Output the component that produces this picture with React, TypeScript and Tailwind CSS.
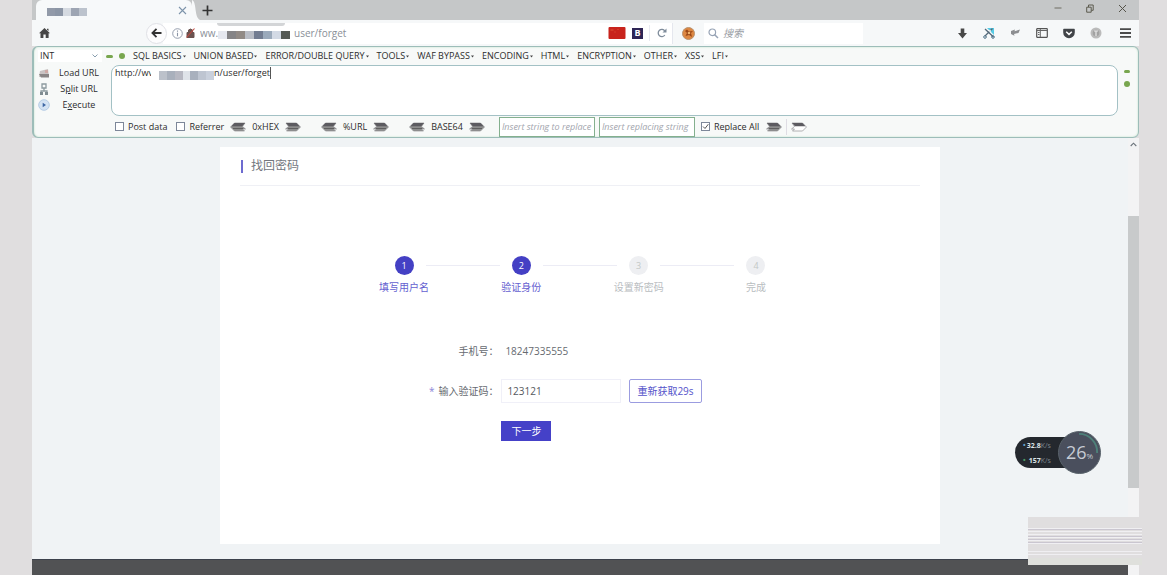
import React from "react";

const menus = [
  "SQL BASICS",
  "UNION BASED",
  "ERROR/DOUBLE QUERY",
  "TOOLS",
  "WAF BYPASS",
  "ENCODING",
  "HTML",
  "ENCRYPTION",
  "OTHER",
  "XSS",
  "LFI",
];

const steps = [
  { label: "填写用户名", active: true },
  { label: "验证身份", active: true },
  { label: "设置新密码", active: false },
  { label: "完成", active: false },
];

function Mosaic({ cells, className }: { cells: string[]; className: string }) {
  return (
    <div aria-hidden="true" className={`pointer-events-none flex ${className}`}>
      {cells.map((c, i) => (
        <span key={i} className={`flex-1 ${c}`} />
      ))}
    </div>
  );
}

function Arrow({ left = false, hollow = false }: { left?: boolean; hollow?: boolean }) {
  return (
    <svg width="16" height="10" viewBox="0 0 16 10" className={left ? "-scale-x-100" : ""} aria-hidden="true">
      <path d="M1 1H11.5L15.5 5L11.5 9H1.5L3.5 7H0.5L3.5 4.5Z" fill={hollow ? "#fff" : "#8d8d8d"} stroke="#8f8f94" strokeWidth="0.7" />
      <path d="M1 1H11.5L14.5 4.2H4Z" fill="#5c5b60" />
      {!hollow && <path d="M3 6.5H13" stroke="#5f5f5f" strokeWidth="1" />}
    </svg>
  );
}

function Converter({ name }: { name: string }) {
  return (
    <div className="flex items-center gap-[6px]">
      <button aria-label={`${name} decode`}><Arrow left /></button>
      <span>{name}</span>
      <button aria-label={`${name} encode`}><Arrow /></button>
    </div>
  );
}

function Check({ label, checked = false }: { label: string; checked?: boolean }) {
  return (
    <label className="flex items-center gap-1">
      <span className="relative flex">
        <input
          type="checkbox"
          defaultChecked={checked}
          className="peer h-[9px] w-[9px] appearance-none border border-[#7d8799] bg-white"
        />
        <svg viewBox="0 0 9 9" className="pointer-events-none absolute inset-0 hidden h-[9px] w-[9px] peer-checked:block">
          <path d="M2 4.5L4 6.5L7.3 2.2" fill="none" stroke="#555" strokeWidth="1" />
        </svg>
      </span>
      {label}
    </label>
  );
}

function TabBar() {
  return (
    <div className="flex h-5 items-stretch bg-[#c5c7c8]">
      <div className="relative ml-1 flex w-[156px] items-center justify-end rounded-t-md bg-[#f7f9fa] pr-1">
        <Mosaic className="absolute top-2 left-[11px] h-2 w-10" cells={["bg-[#929aa9]", "bg-[#8c96a6]", "bg-[#d5dae1]", "bg-[#9da5b3]", "bg-[#bcc3cd]"]} />
        <button aria-label="Close tab" className="flex pr-px">
          <svg width="9" height="9" viewBox="0 0 9 9"><path d="M1 1L8 8M8 1L1 8" stroke="#7d94aa" strokeWidth="1.1" /></svg>
        </button>
        <svg className="absolute top-0 left-full h-5 w-2" viewBox="0 0 8 20" preserveAspectRatio="none"><path d="M0 0C5 2 2 17 8 20H0Z" fill="#f7f9fa" /></svg>
      </div>
      <button aria-label="New tab" className="flex items-center pl-[10px]">
        <svg width="11" height="11" viewBox="0 0 11 11"><path d="M5.5 0.5V10.5M0.5 5.5H10.5" stroke="#333" strokeWidth="1.7" /></svg>
      </button>
      <div className="ml-auto flex items-center gap-6 pr-3 pb-1">
        <button aria-label="Minimize"><svg width="8" height="8" viewBox="0 0 8 8"><path d="M0.5 4H7.5" stroke="#6e6c62" /></svg></button>
        <button aria-label="Restore"><svg width="8" height="9" viewBox="0 0 8 9"><path d="M0.7 3.2H5.2V8.2H0.7ZM2.5 3V1H7.2V6.3H5.4" fill="none" stroke="#5c5a4e" /></svg></button>
        <button aria-label="Close window"><svg width="9" height="9" viewBox="0 0 9 9"><path d="M1 1L8 8M8 1L1 8" stroke="#55534a" /></svg></button>
      </div>
    </div>
  );
}

function NavBar() {
  return (
    <div className="flex h-[26px] items-center bg-[#f6f8f9]">
      <button aria-label="Home" className="ml-[7px]">
        <svg width="11" height="10" viewBox="0 0 11 10"><path d="M5.5 0L11 5.2H9.6V10H6.7V6.6H4.4V10H1.5V5.2H0L5.5 0ZM8 0.8H9.5V3L8 1.8Z" fill="#464646" /></svg>
      </button>
      <button aria-label="Back" className="z-10 ml-24 flex h-[21px] w-[21px] items-center justify-center rounded-full border border-[#e0e1e6] bg-[#fcfcfd]">
        <svg width="11" height="10" viewBox="0 0 11 10"><path d="M5.5 0.8L1.4 5L5.5 9.2M1.5 5H10.5" fill="none" stroke="#333" strokeWidth="1.8" /></svg>
      </button>
      <div className="relative -ml-1 flex h-[21px] flex-1 items-center bg-white pl-[9px]">
        <svg width="11" height="11" viewBox="0 0 11 11"><circle cx="5.5" cy="5.5" r="4.8" fill="none" stroke="#8b94a5" strokeWidth="0.9" /><path d="M5.5 4.8V8.2M5.5 2.6V3.8" stroke="#8b94a5" strokeWidth="1.1" /></svg>
        <svg width="9" height="10" viewBox="0 0 9 10" className="ml-[3px]"><path d="M1 4.5H8V9.5H1ZM2.5 4.5V2Q4.5 0 6.5 2V4.5" fill="#6b5350" stroke="#6b5350" /><path d="M0.5 9.5L8.5 0.5" stroke="#c44940" strokeWidth="1.1" /></svg>
        <input aria-label="Address" defaultValue={"ww."} className="ml-[5px] w-[18px] bg-transparent text-[10px] text-[#8a8f98] outline-none" />
        <Mosaic className="mt-1 h-2 w-[72px]" cells={["bg-[#e6e8ef]", "bg-[#858486]", "bg-[#918a85]", "bg-[#b9bdc5]", "bg-[#737d91]", "bg-[#9baabb]", "bg-[#d3dae5]", "bg-[#555a55]"]} />
        <span className="ml-1 text-[10px] text-[#8a8f98]">user/forget</span>
        <span className="absolute top-0 left-[54px] h-[3px] w-[68px] rounded-b-full bg-[#d3d5d7]" />
        <div className="ml-auto flex items-center gap-[6px] pr-1">
          <svg width="18" height="12" viewBox="0 0 17 12"><rect width="17" height="12" rx="1" fill="#c8231c" /><path d="M2 3H5M9 2.5H10M6 5H7" stroke="#dc5434" /></svg>
          <span className="flex h-[11px] w-[11px] items-center justify-center bg-[#2e2555] text-[9px] font-bold text-white">B</span>
          <span className="h-4 w-px bg-[#e9ebf2]" />
          <button aria-label="Reload" className="mx-px">
            <svg width="10" height="10" viewBox="0 0 10 10"><path d="M7.8 7A3.6 3.6 0 1 1 7.8 3" fill="none" stroke="#7f8c9b" strokeWidth="1.3" /><path d="M9.5 0.5V4.5H5.5Z" fill="#7f8c9b" /></svg>
          </button>
        </div>
      </div>
      <div className="flex h-[21px] items-center border-l border-[#e5e7ee] px-[9px]">
        <svg width="13" height="13" viewBox="0 0 13 13"><circle cx="6.5" cy="6.5" r="6" fill="#dd8742" stroke="#b8926f" /><path d="M3 4L5 6L3.5 9L7 8L10 10L9 6L11 4L7 4.5L5 2.5Z" fill="#9a4616" /><circle cx="7" cy="6" r="1.3" fill="#efb16b" /></svg>
      </div>
      <div className="flex h-[21px] w-[159px] items-center bg-white pl-1">
        <svg width="11" height="11" viewBox="0 0 11 11"><circle cx="4.3" cy="4.3" r="3.3" fill="none" stroke="#97a3b5" strokeWidth="1.2" /><path d="M6.7 6.7L10 10" stroke="#97a3b5" strokeWidth="1.5" /></svg>
        <input aria-label="搜索" placeholder="搜索" className="ml-1 min-w-0 flex-1 bg-transparent text-[10px] italic outline-none placeholder:text-[#9a9ea5]" />
      </div>
      <div className="ml-[94px] flex items-center gap-[15px] pr-[8px]">
        <button aria-label="Downloads"><svg width="11" height="11" viewBox="0 0 11 11"><path d="M3.7 0.5H7.3V5H10L5.5 10.5L1 5H3.7Z" fill="#484848" /></svg></button>
        <button aria-label="Screenshot"><svg width="12" height="12" viewBox="0 0 12 12"><path d="M4 1H11V8Z" fill="#57cbe5" /><path d="M2 2L10.5 10M9.5 1.5L2 9" stroke="#536878" strokeWidth="1.3" /><circle cx="2" cy="10" r="1.3" fill="none" stroke="#4e7288" /><circle cx="10" cy="10" r="1.3" fill="none" stroke="#4e7288" /><circle cx="7" cy="4" r="1" fill="#fff" /></svg></button>
        <button aria-label="Undo"><svg width="11" height="10" viewBox="0 0 11 10"><path d="M1 3L5 1.5L4.5 3.3L10 1.5L8.5 5L4 6L4.5 7.8L1 6Z" fill="#8c8e91" /></svg></button>
        <button aria-label="Sidebar"><svg width="12" height="10" viewBox="0 0 12 10"><rect x="0.7" y="0.7" width="10.6" height="8.6" rx="0.5" fill="none" stroke="#555" strokeWidth="1.2" /><path d="M4.3 1V9M1 2.5H11M2 4.5H3.5M2 6.5H3.5" stroke="#666" /></svg></button>
        <button aria-label="Pocket"><svg width="12" height="11" viewBox="0 0 12 11"><path d="M1 0.7H11Q12 0.7 11.8 2V4.5A5.8 5.8 0 0 1 0.2 4.5V2Q0 0.7 1 0.7Z" fill="#414448" /><path d="M3.2 3.8L6 6.4L8.8 3.8" fill="none" stroke="#fff" strokeWidth="1.5" /></svg></button>
        <button aria-label="Add-on"><svg width="12" height="12" viewBox="0 0 12 12"><circle cx="6" cy="6" r="5.5" fill="#bbb" /><circle cx="6" cy="6" r="3.3" fill="#a2a2a2" /><path d="M4 4H8M6 4V9" stroke="#e8e8e8" strokeWidth="1.2" /></svg></button>
        <button aria-label="Menu" className="ml-[3px]"><svg width="11" height="10" viewBox="0 0 11 10"><path d="M0 1.2H11M0 5H11M0 8.8H11" stroke="#4a4a4a" strokeWidth="1.8" /></svg></button>
      </div>
    </div>
  );
}

function HackBar() {
  return (
    <section className="flex h-[92px] flex-col rounded-md border border-[#9dbdb9] border-l-2 bg-[#f7f9f8] text-[9px] leading-3 text-[#2c2c2c] shadow-[inset_0_0_2px_#b8dfc0]">
      <div className="flex h-[18px] items-center">
        <div className="relative ml-1 w-[64px] bg-white">
          <select aria-label="Type" className="w-full appearance-none bg-transparent pl-[2px] outline-none">
            <option>INT</option>
          </select>
          <svg width="6" height="4" viewBox="0 0 6 4" className="pointer-events-none absolute top-1 right-1"><path d="M0.5 0.5L3 3L5.5 0.5" fill="none" stroke="#8a9faf" /></svg>
        </div>
        <span className="ml-1 h-[3px] w-[7px] rounded-sm bg-[#78a64e]" />
        <span className="ml-1.5 h-[6px] w-[6px] rounded-full bg-[#78a64e]" />
        <nav className="ml-2 flex gap-2 whitespace-nowrap">
          {menus.map((m) => (
            <button key={m} className="flex items-center gap-px">
              {m}
              <svg width="3" height="3" viewBox="0 0 3 3"><path d="M0 0.5H3L1.5 2.5Z" fill="#444" /></svg>
            </button>
          ))}
        </nav>
      </div>
      <div className="flex h-[51px]">
        <div className="flex w-[77px] flex-col">
          <button className="flex h-4 items-center"><svg width="12" height="11" viewBox="0 0 12 11" className="ml-1"><path d="M2 3L10 1L11 9H1Z" fill="#c9c3c3" /><path d="M1 6H11V9.5H3Z" fill="#898585" /><path d="M7 2H10V5H7Z" fill="#ceaaa6" /></svg><span className="flex-1 pr-[3px] text-center">Load URL</span></button>
          <button className="flex h-4 items-center"><svg width="12" height="12" viewBox="0 0 12 12" className="ml-1"><path d="M4 1H8V5H4ZM6 5V8M3 11V8H9V11" fill="none" stroke="#8d9a9f" strokeWidth="1.3" /><path d="M2 9H5V12H2ZM7 9H10V12H7Z" fill="#7f8c91" /></svg><span className="flex-1 pr-[3px] text-center">S<u>p</u>lit URL</span></button>
          <button className="flex h-4 items-center"><svg width="12" height="12" viewBox="0 0 12 12" className="ml-1"><circle cx="6" cy="6" r="5.3" fill="#d4e3f3" stroke="#b5cce4" /><path d="M4.7 3.8L8 6L4.7 8.2Z" fill="#3e67a4" /></svg><span className="flex-1 pr-[3px] text-center">E<u>x</u>ecute</span></button>
        </div>
        <div className="relative flex-1">
          <textarea
            aria-label="URL"
            defaultValue={"http://wv"}
            className="block h-full w-full resize-none rounded-lg border border-[#a3c1c5] bg-white px-[3px] pt-px outline-none"
          />
          <div className="pointer-events-none absolute top-[2px] left-[40px] flex items-start">
            <Mosaic className="mt-1 h-[9px] w-[63px] border-l-8 border-white" cells={["bg-[#bcc1ca]", "bg-[#a9b0bc]", "bg-[#b7b8c2]", "bg-[#dfe3e9]", "bg-[#a8b0bd]", "bg-[#bec5d1]", "bg-[#c9d0dc]"]} />
            <span className="border-r border-[#555] leading-3">n/user/forget</span>
          </div>
        </div>
        <div className="flex w-5 flex-col items-center gap-2 pt-[5px] pr-[3px]">
          <span className="h-[3px] w-[6px] rounded-sm bg-[#78a64e]" />
          <span className="h-[6px] w-[6px] rounded-full bg-[#78a64e]" />
        </div>
      </div>
      <div className="flex h-[21px] items-center pl-[81px] whitespace-nowrap">
        <div className="flex gap-[9px]">
          <Check label="Post data" />
          <Check label="Referrer" />
        </div>
        <div className="ml-[6px] flex gap-5">
          <Converter name="0xHEX" />
          <Converter name="%URL" />
          <Converter name="BASE64" />
        </div>
        <div className="mr-[6px] ml-[14px] flex gap-1">
          <input aria-label="String to replace" placeholder="Insert string to replace" className="h-5 w-24 border border-[#84b08e] bg-white px-[2px] italic outline-none placeholder:text-[#a2a5ad]" />
          <input aria-label="Replacing string" placeholder="Insert replacing string" className="h-5 w-24 border border-[#84b08e] bg-white px-[2px] italic outline-none placeholder:text-[#a2a5ad]" />
        </div>
        <Check label="Replace All" checked />
        <button aria-label="Replace" className="ml-[7px]"><Arrow /></button>
        <span className="mx-1 h-4 w-px bg-[#dfdde4]" />
        <button aria-label="Replace next"><Arrow hollow /></button>
      </div>
    </section>
  );
}

function Steps() {
  return (
    <ol className="mx-auto mt-[70px] flex w-[69%]">
      {steps.map((s, i) => (
        <li key={s.label} className="flex flex-1 flex-col items-center">
          <div className="flex w-full items-center">
            <span className={`h-px flex-1 ${i === 0 ? "bg-transparent" : "bg-[#ececf5]"}`} />
            <span className={`mx-3 flex h-[19px] w-[19px] items-center justify-center rounded-full text-[9px] ${s.active ? "bg-[#4440c4] text-white" : "bg-[#eeeff2] text-[#c3c8c6]"}`}>{i + 1}</span>
            <span className={`h-px flex-1 ${i === 3 ? "bg-transparent" : "bg-[#ececf5]"}`} />
          </div>
          <span className={`mt-1 text-[10px] leading-4 ${s.active ? "text-[#6460d0]" : "text-[#b9bdbf]"}`}>{s.label}</span>
        </li>
      ))}
    </ol>
  );
}

function ResetForm() {
  return (
    <form className="mt-[46px] grid grid-cols-[38%_1fr] items-center gap-y-[18px] text-[10px] text-[#666a70]" onSubmit={(e) => e.preventDefault()}>
      <span className="text-right leading-5">手机号：</span>
      <span className="pl-[7px]">18247335555</span>
      <label htmlFor="code" className="text-right"><span className="mr-1 text-[#8a86d8]">*</span>输入验证码：</label>
      <div className="flex gap-2 pl-[3px]">
        <input id="code" defaultValue="123121" className="h-6 w-[120px] border border-[#f0f0f8] px-[5px] text-[#555960] outline-none" />
        <button type="button" className="h-6 rounded-xs border border-[#9b9ce0] px-[7px] text-[#5553ca]">重新获取29s</button>
      </div>
      <div className="col-start-2 pl-[3px]">
        <button className="block h-5 w-[50px] bg-[#4541c8] text-white">下一步</button>
      </div>
    </form>
  );
}

function SpeedWidget() {
  return (
    <div className="absolute top-[431px] right-[66px] flex items-center">
      <div className="-mr-4 flex h-[31px] w-[59px] flex-col justify-center rounded-l-full bg-[#24282e] pl-2 text-[7px] leading-[15px] font-bold text-[#dde3e6]">
        <span><span className="mr-px text-[#64a3d0]">•</span>32.8<span className="font-normal text-[#7b858e]">K/s</span></span>
        <span><span className="mr-[3px] text-[#4b9a64]">•</span>157<span className="font-normal text-[#7b858e]">K/s</span></span>
      </div>
      <div className="relative flex h-[43px] w-[43px] items-center justify-center rounded-full border border-[#59636b] bg-[#4a4f5d] text-[18px] text-[#c7cbd4]">
        <svg viewBox="0 0 43 43" className="absolute inset-0" aria-hidden="true"><path d="M21 2A19 19 0 0 1 40 22" fill="none" stroke="#4e8079" strokeWidth="2" /></svg>
        26<span className="mt-1.5 text-[8px]">%</span>
      </div>
    </div>
  );
}

export default function App() {
  return (
    <div className="relative flex min-h-screen flex-col bg-[#e0dedf] pr-7 pl-8 font-['Open_Sans','Noto_Sans_CJK_SC',sans-serif]">
      <header>
        <TabBar />
        <NavBar />
        <HackBar />
      </header>
      <div className="flex flex-1">
        <div className="flex flex-1 flex-col bg-[#f0f3f5]">
          <main className="mx-auto mt-[9px] mb-[15px] w-full max-w-[720px] bg-white px-5 pb-[103px]">
            <div className="border-b border-[#eff0f5] py-[9px]">
              <h1 className="flex items-center gap-2 pl-px text-[12px] leading-5 text-[#73777e]"><span className="h-[13px] w-[2px] bg-[#6d6bd0]" />找回密码</h1>
            </div>
            <Steps />
            <ResetForm />
          </main>
          <footer className="min-h-4 flex-1 border-t border-[#3c414b] bg-[#515254]" />
        </div>
        <div className="flex w-[11px] flex-col items-center bg-[#f3f3f4] pt-1">
          <svg width="7" height="5" viewBox="0 0 7 5"><path d="M0.7 4L3.5 1.2L6.3 4" fill="none" stroke="#6c747c" strokeWidth="1.1" /></svg>
          <span className="mt-[69px] h-[272px] w-full bg-[#c8cacb]" />
        </div>
      </div>
      <SpeedWidget />
      <svg className="absolute right-[25px] bottom-[10px] h-12 w-[114px]" viewBox="0 0 114 48" preserveAspectRatio="none" aria-hidden="true">
        <rect width="114" height="48" fill="#e0dedf" />
        <path d="M0 11.5H114M0 14.5H114M0 17.5H114M0 20.5H114M0 23.5H114M0 26.5H114M0 34.5H114M0 37.5H114" stroke="#f0eff2" />
        <path d="M0 12.5H114M0 19.5H114M0 22.5H114M0 25.5H114" stroke="#cac6d0" />
        <rect y="41" width="114" height="7" fill="#dfe0dc" />
      </svg>
    </div>
  );
}
